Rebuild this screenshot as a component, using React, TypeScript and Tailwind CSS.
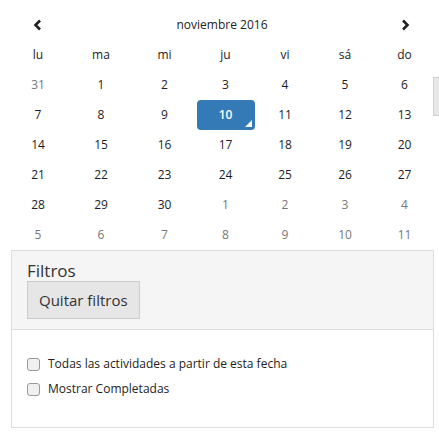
import React from 'react';

const weekDays = ['lu', 'ma', 'mi', 'ju', 'vi', 'sá', 'do'];

// [day, inMonth]
const weeks: [number, boolean][][] = [
  [[31, false], [1, true], [2, true], [3, true], [4, true], [5, true], [6, true]],
  [[7, true], [8, true], [9, true], [10, true], [11, true], [12, true], [13, true]],
  [[14, true], [15, true], [16, true], [17, true], [18, true], [19, true], [20, true]],
  [[21, true], [22, true], [23, true], [24, true], [25, true], [26, true], [27, true]],
  [[28, true], [29, true], [30, true], [1, false], [2, false], [3, false], [4, false]],
  [[5, false], [6, false], [7, false], [8, false], [9, false], [10, false], [11, false]],
];

const Chevron = ({ dir }: { dir: 'left' | 'right' }) => (
  <svg width="10" height="12" viewBox="0 0 10 12">
    <path
      d={dir === 'left' ? 'M7 1.5 L2.5 6 L7 10.5' : 'M3 1.5 L7.5 6 L3 10.5'}
      fill="none"
      stroke="#222"
      strokeWidth="2.6"
    />
  </svg>
);

const App = () => {
  return (
    <div
      className="relative w-[439px] h-[434px] bg-white text-[#333] overflow-hidden"
      style={{ fontFamily: '"Open Sans", "Noto Sans", sans-serif' }}
    >
      {/* calendar */}
      <div className="pt-[10px] px-[7px]">
        <div className="grid grid-cols-[62px_64px_63px_59px_60px_60px_59px] w-[427px]">
          <div className="h-[30px] flex items-center justify-center">
            <Chevron dir="left" />
          </div>
          <div className="col-span-5 h-[30px] flex items-center justify-center text-[12px] text-[#222]">
            noviembre 2016
          </div>
          <div className="h-[30px] flex items-center justify-center">
            <Chevron dir="right" />
          </div>
          {weekDays.map((d) => (
            <div
              key={d}
              className="h-[30px] flex items-center justify-center text-[12px] text-[#222]"
            >
              {d}
            </div>
          ))}
          {weeks.flat().map(([day, inMonth], i) => {
            const selected = inMonth && day === 10;
            return (
              <div key={i} className="h-[30px] flex items-center justify-center">
                {selected ? (
                  <div className="relative w-[58px] h-[30px] rounded-[4px] bg-[#337ab7] text-white font-semibold text-[12px] flex items-center justify-center">
                    {day}
                    <span className="absolute right-[3px] bottom-[3px] w-0 h-0 border-l-[7px] border-l-transparent border-b-[7px] border-b-white" />
                  </div>
                ) : (
                  <span
                    className={
                      'text-[12px] ' + (inMonth ? 'text-[#1c1c28]' : 'text-[#777]')
                    }
                  >
                    {day}
                  </span>
                )}
              </div>
            );
          })}
        </div>
      </div>

      {/* stray scroll thumb on the right edge */}
      <div className="absolute left-[433px] top-[77px] w-[12px] h-[39px] bg-[#e8e8e8] border border-[#d0d0d0]" />

      {/* filters panel */}
      <div className="ml-[11px] w-[423px] h-[178px] border border-[#dddddd] bg-white">
        <div className="bg-[#f5f5f5] border-b border-[#dddddd] px-[15px] pt-[9px] pb-[10px]">
          <div className="text-[17px] leading-[21px] text-[#333]">Filtros</div>
          <button className="h-[38px] px-[11px] bg-[#e6e6e6] border border-[#cccccc] text-[15px] text-[#333]">
            Quitar filtros
          </button>
        </div>
        <div className="px-[15px] pt-[27px] flex flex-col gap-[11px]">
          <label className="flex items-center gap-[8px] text-[12px] text-[#222] h-[14px]">
            <span className="w-[13px] h-[13px] rounded-[3px] border border-[#999] bg-[#f0f0f0]" />
            Todas las actividades a partir de esta fecha
          </label>
          <label className="flex items-center gap-[8px] text-[12px] text-[#222] h-[14px]">
            <span className="w-[13px] h-[13px] rounded-[3px] border border-[#999] bg-[#f0f0f0]" />
            Mostrar Completadas
          </label>
        </div>
      </div>
    </div>
  );
};

export default App;
